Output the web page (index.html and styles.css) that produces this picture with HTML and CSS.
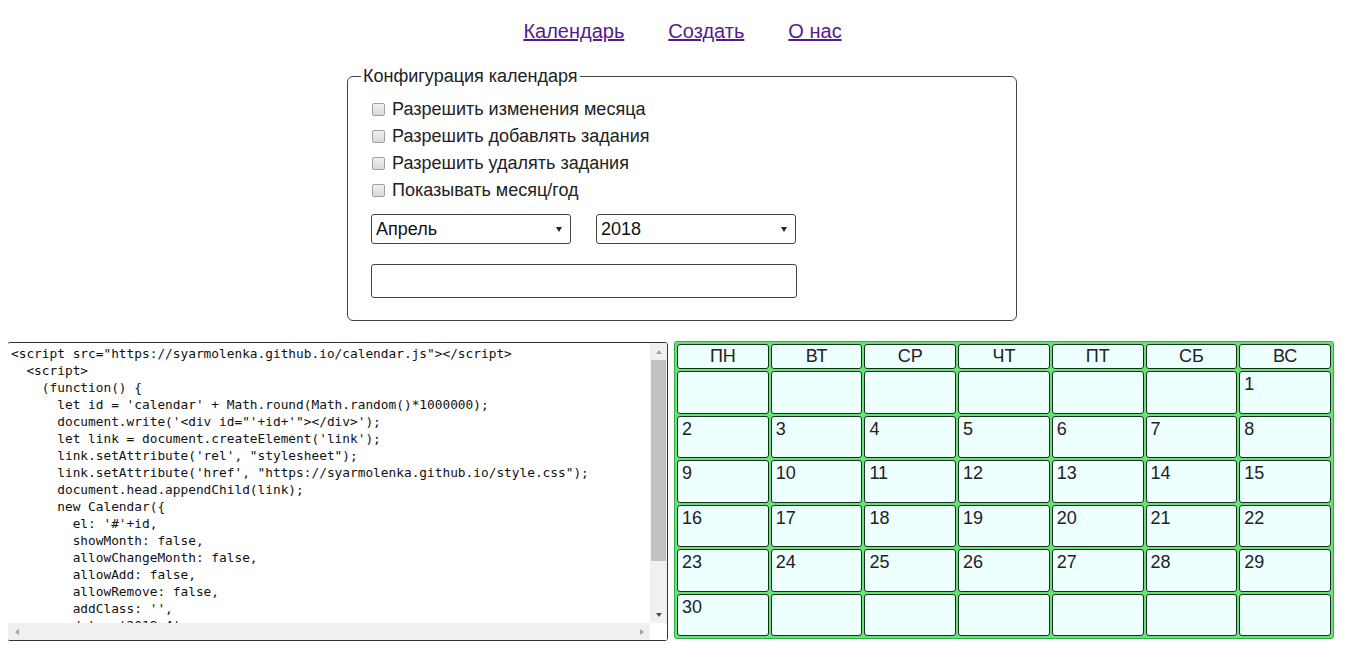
FILE: index.html
```html
<!DOCTYPE html>
<html lang="ru">
<head>
<meta charset="utf-8">
<title>Календарь</title>
<link rel="stylesheet" href="styles.css">
</head>
<body>
<nav class="nav">
  <a class="nav-link" href="#">Календарь</a>
  <a class="nav-link" href="#">Создать</a>
  <a class="nav-link" href="#">О нас</a>
</nav>

<fieldset class="config">
  <legend class="config-legend">Конфигурация календаря</legend>
  <label class="opt"><input type="checkbox" class="chk"><span>Разрешить изменения месяца</span></label>
  <label class="opt"><input type="checkbox" class="chk"><span>Разрешить добавлять задания</span></label>
  <label class="opt"><input type="checkbox" class="chk"><span>Разрешить удалять задания</span></label>
  <label class="opt"><input type="checkbox" class="chk"><span>Показывать месяц/год</span></label>
  <div class="selects">
    <div class="select-wrap">
      <select class="sel">
        <option>Январь</option><option>Февраль</option><option>Март</option>
        <option selected>Апрель</option><option>Май</option><option>Июнь</option>
      </select>
    </div>
    <div class="select-wrap">
      <select class="sel">
        <option>2017</option><option selected>2018</option><option>2019</option>
      </select>
    </div>
  </div>
  <input type="text" class="text-input">
</fieldset>

<div class="bottom">
<div class="code-box">
<textarea class="code" wrap="off" spellcheck="false">&lt;script src="https://syarmolenka.github.io/calendar.js"&gt;&lt;/script&gt;
  &lt;script&gt;
    (function() {
      let id = 'calendar' + Math.round(Math.random()*1000000);
      document.write('&lt;div id="'+id+'"&gt;&lt;/div&gt;');
      let link = document.createElement('link');
      link.setAttribute('rel', "stylesheet");
      link.setAttribute('href', "https://syarmolenka.github.io/style.css");
      document.head.appendChild(link);
      new Calendar({
        el: '#'+id,
        showMonth: false,
        allowChangeMonth: false,
        allowAdd: false,
        allowRemove: false,
        addClass: '',
        date: '2018-4',
      });
    })();
  &lt;/script&gt;</textarea>
  <div class="vscroll">
    <span class="sb-btn"><span class="arr arr-up"></span></span>
    <span class="sb-track"><span class="sb-thumb"></span></span>
    <span class="sb-btn"><span class="arr arr-down"></span></span>
  </div>
  <div class="hscroll">
    <span class="sb-btn"><span class="arr arr-left"></span></span>
    <span class="sb-track"></span>
    <span class="sb-btn"><span class="arr arr-right"></span></span>
  </div>
  <div class="sb-corner"></div>
</div>

<table class="cal">
  <thead>
    <tr><th>ПН</th><th>ВТ</th><th>СР</th><th>ЧТ</th><th>ПТ</th><th>СБ</th><th>ВС</th></tr>
  </thead>
  <tbody>
    <tr><td></td><td></td><td></td><td></td><td></td><td></td><td>1</td></tr>
    <tr><td>2</td><td>3</td><td>4</td><td>5</td><td>6</td><td>7</td><td>8</td></tr>
    <tr><td>9</td><td>10</td><td>11</td><td>12</td><td>13</td><td>14</td><td>15</td></tr>
    <tr><td>16</td><td>17</td><td>18</td><td>19</td><td>20</td><td>21</td><td>22</td></tr>
    <tr><td>23</td><td>24</td><td>25</td><td>26</td><td>27</td><td>28</td><td>29</td></tr>
    <tr><td>30</td><td></td><td></td><td></td><td></td><td></td><td></td></tr>
  </tbody>
</table>
</div>
</body>
</html>
```
FILE: styles.css
```css
html, body {
  background: #fff;
}
body {
  margin: 8px;
  font-family: "Liberation Sans", Arial, sans-serif;
  color: #222;
}

.nav {
  display: flex;
  justify-content: center;
  gap: 44px;
  margin-top: 12px;
  height: 23px;
  font-size: 20px;
  line-height: 23px;
}
.nav-link {
  color: #551a8b;
  text-decoration: underline;
}

.config {
  box-sizing: border-box;
  width: 670px;
  margin: 23px auto 0 339px;
  padding: 9px 23px 22px 23px;
  border: 1px solid #444;
  border-radius: 6px;
  font-size: 18px;
}
.config-legend {
  margin-left: -10px;
  padding: 0 2px;
  font-size: 18px;
  line-height: 21px;
}
.opt {
  display: flex;
  align-items: center;
  height: 27px;
}
.chk {
  appearance: none;
  -webkit-appearance: none;
  box-sizing: border-box;
  width: 13px;
  height: 13px;
  margin: 0 7px 0 1px;
  border: 1px solid #a0a0a0;
  border-radius: 2px;
  background: linear-gradient(#f0f0f0, #d9d9d9);
}

.selects {
  display: flex;
  gap: 25px;
  margin-top: 10px;
}
.select-wrap {
  position: relative;
  width: 200px;
  height: 30px;
}
.select-wrap::after {
  content: "";
  position: absolute;
  right: 9px;
  top: 13px;
  border-left: 3.5px solid transparent;
  border-right: 3.5px solid transparent;
  border-top: 5px solid #222;
}
.sel {
  appearance: none;
  -webkit-appearance: none;
  box-sizing: border-box;
  width: 200px;
  height: 30px;
  padding: 0 4px;
  border: 1px solid #444;
  border-radius: 3px;
  background: #fff;
  font-family: "Liberation Sans", Arial, sans-serif;
  font-size: 18px;
  color: #111;
}
.text-input {
  display: block;
  box-sizing: border-box;
  width: 426px;
  height: 34px;
  margin-top: 20px;
  border: 1px solid #444;
  border-radius: 3px;
  background: #fff;
  font-size: 18px;
}

.bottom {
  display: flex;
  align-items: flex-start;
  gap: 6px;
  margin-top: 20px;
  margin-left: -1px;
}
.code-box {
  position: relative;
  box-sizing: border-box;
  width: 661px;
  height: 299px;
  margin-top: 1px;
  border: 1px solid #333;
  border-radius: 3px;
  overflow: hidden;
  background: #fff;
}
.code {
  display: block;
  box-sizing: border-box;
  width: 100%;
  height: 100%;
  margin: 0;
  padding: 2px 20px 19px 3px;
  border: none;
  outline: none;
  overflow: hidden;
  resize: none;
  font-family: "DejaVu Sans Mono", "Liberation Mono", monospace;
  font-size: 12.8px;
  line-height: 17px;
  color: #111;
  white-space: pre;
  background: #fff;
}

.vscroll,
.hscroll {
  position: absolute;
  display: flex;
  background: #f0f0f0;
}
.vscroll {
  top: 0;
  right: 0;
  bottom: 17px;
  width: 17px;
  flex-direction: column;
}
.hscroll {
  left: 0;
  right: 17px;
  bottom: 0;
  height: 17px;
}
.sb-corner {
  position: absolute;
  right: 0;
  bottom: 0;
  width: 17px;
  height: 17px;
  background: #fff;
}
.sb-btn {
  display: flex;
  align-items: center;
  justify-content: center;
  flex: 0 0 17px;
  width: 17px;
  height: 17px;
}
.sb-track {
  flex: 1;
  display: flex;
  flex-direction: column;
}
.sb-thumb {
  display: block;
  height: 201px;
  margin: 0 1px;
  background: #c1c1c1;
}
.arr {
  width: 0;
  height: 0;
}
.arr-up {
  border-left: 3.5px solid transparent;
  border-right: 3.5px solid transparent;
  border-bottom: 4px solid #a3a3a3;
}
.arr-down {
  border-left: 3.5px solid transparent;
  border-right: 3.5px solid transparent;
  border-top: 4px solid #505050;
}
.arr-left {
  border-top: 3.5px solid transparent;
  border-bottom: 3.5px solid transparent;
  border-right: 4px solid #a3a3a3;
}
.arr-right {
  border-top: 3.5px solid transparent;
  border-bottom: 3.5px solid transparent;
  border-left: 4px solid #a3a3a3;
}

.cal {
  box-sizing: border-box;
  width: 660px;
  height: 298px;
  border: 1px solid #3aa84a;
  border-radius: 3px;
  border-spacing: 2px;
  background: #64e675;
  table-layout: fixed;
  font-size: 18px;
  color: #222;
}
.cal th,
.cal td {
  border: 1px solid #1f2a1f;
  border-radius: 3px;
  background: #eeffff;
}
.cal th {
  height: 23px;
  padding: 0;
  font-weight: normal;
  text-align: center;
  vertical-align: middle;
  line-height: 21px;
}
.cal td {
  height: 41px;
  padding: 2px 4px;
  text-align: left;
  vertical-align: top;
  line-height: 21px;
  box-sizing: border-box;
}
```
